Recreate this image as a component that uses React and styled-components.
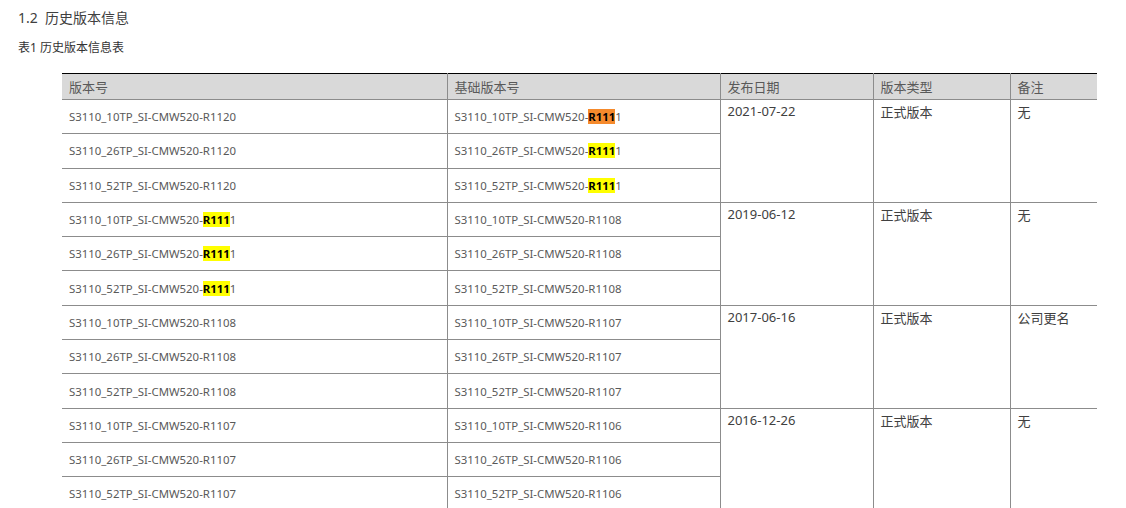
import styled, { createGlobalStyle } from "styled-components"

const Global = createGlobalStyle`
    body {
        margin: 0;
        background: #ffffff;
        font-family: "Noto Sans", "Noto Sans CJK SC", sans-serif;
    }
`

const Page = styled.div`
    padding: 8px 0 0 18px;
    color: #333333;
`

const Heading = styled.div`
    font-size: 14px;
    line-height: 20px;
    color: #404040;
`

const Caption = styled.div`
    margin-top: 11px;
    font-size: 12px;
    line-height: 18px;
    color: #333333;
`

const Table = styled.table`
    margin: 16px 0 0 44px;
    width: 1035px;
    border-collapse: collapse;
    table-layout: fixed;
    border-top: 1px solid #000000;
`

const Th = styled.th`
    background: #d9d9d9;
    height: 25px;
    padding: 0 7px;
    text-align: left;
    font-weight: normal;
    font-size: 13px;
    color: #595959;
    border-bottom: 1px solid #8c8c8c;
    border-left: ${p => (p.$first ? "none" : "1px solid #8c8c8c")};
`

const Td = styled.td`
    height: 33.3px;
    padding: 0 7px;
    font-size: 11.4px;
    color: #595959;
    border-bottom: 1px solid #8c8c8c;
    border-left: ${p => (p.$first ? "none" : "1px solid #8c8c8c")};
    vertical-align: middle;
    white-space: nowrap;
`

const InfoTd = styled(Td)`
    vertical-align: top;
    padding-top: 2px;
    font-size: 13px;
    color: #404040;
`

const Mark = styled.span`
    background: ${p => (p.$orange ? "#f58a2c" : "#ffff00")};
    color: #000000;
    font-weight: bold;
`

const prefixes = [`S3110_10TP_SI-CMW520-`, `S3110_26TP_SI-CMW520-`, `S3110_52TP_SI-CMW520-`]

const groups = [
    { ver: "R1120", base: "R1111", baseMark: true, date: "2021-07-22", note: "无" },
    { ver: "R1111", verMark: true, base: "R1108", date: "2019-06-12", note: "无" },
    { ver: "R1108", base: "R1107", date: "2017-06-16", note: "公司更名" },
    { ver: "R1107", base: "R1106", date: "2016-12-26", note: "无" },
]

const Cell = ({ prefix, code, mark, orange }) =>
    mark ? (
        <>
            {prefix}
            <Mark $orange={orange}>R111</Mark>1
        </>
    ) : (
        prefix + code
    )

const App = () => {
    return (
        <Page>
            <Global />
            <Heading>1.2&nbsp;&nbsp;历史版本信息</Heading>
            <Caption>表1 历史版本信息表</Caption>
            <Table>
                <colgroup>
                    <col style={{ width: 385 }} />
                    <col style={{ width: 273 }} />
                    <col style={{ width: 153 }} />
                    <col style={{ width: 137 }} />
                    <col style={{ width: 87 }} />
                </colgroup>
                <thead>
                    <tr>
                        <Th $first>版本号</Th>
                        <Th>基础版本号</Th>
                        <Th>发布日期</Th>
                        <Th>版本类型</Th>
                        <Th>备注</Th>
                    </tr>
                </thead>
                <tbody>
                    {groups.map((g, gi) =>
                        prefixes.map((p, i) => (
                            <tr key={gi + "-" + i}>
                                <Td $first>
                                    <Cell prefix={p} code={g.ver} mark={g.verMark} />
                                </Td>
                                <Td>
                                    <Cell prefix={p} code={g.base} mark={g.baseMark} orange={i === 0} />
                                </Td>
                                {i === 0 && (
                                    <>
                                        <InfoTd rowSpan={3}>{g.date}</InfoTd>
                                        <InfoTd rowSpan={3}>正式版本</InfoTd>
                                        <InfoTd rowSpan={3}>{g.note}</InfoTd>
                                    </>
                                )}
                            </tr>
                        ))
                    )}
                </tbody>
            </Table>
        </Page>
    )
}

export default App
